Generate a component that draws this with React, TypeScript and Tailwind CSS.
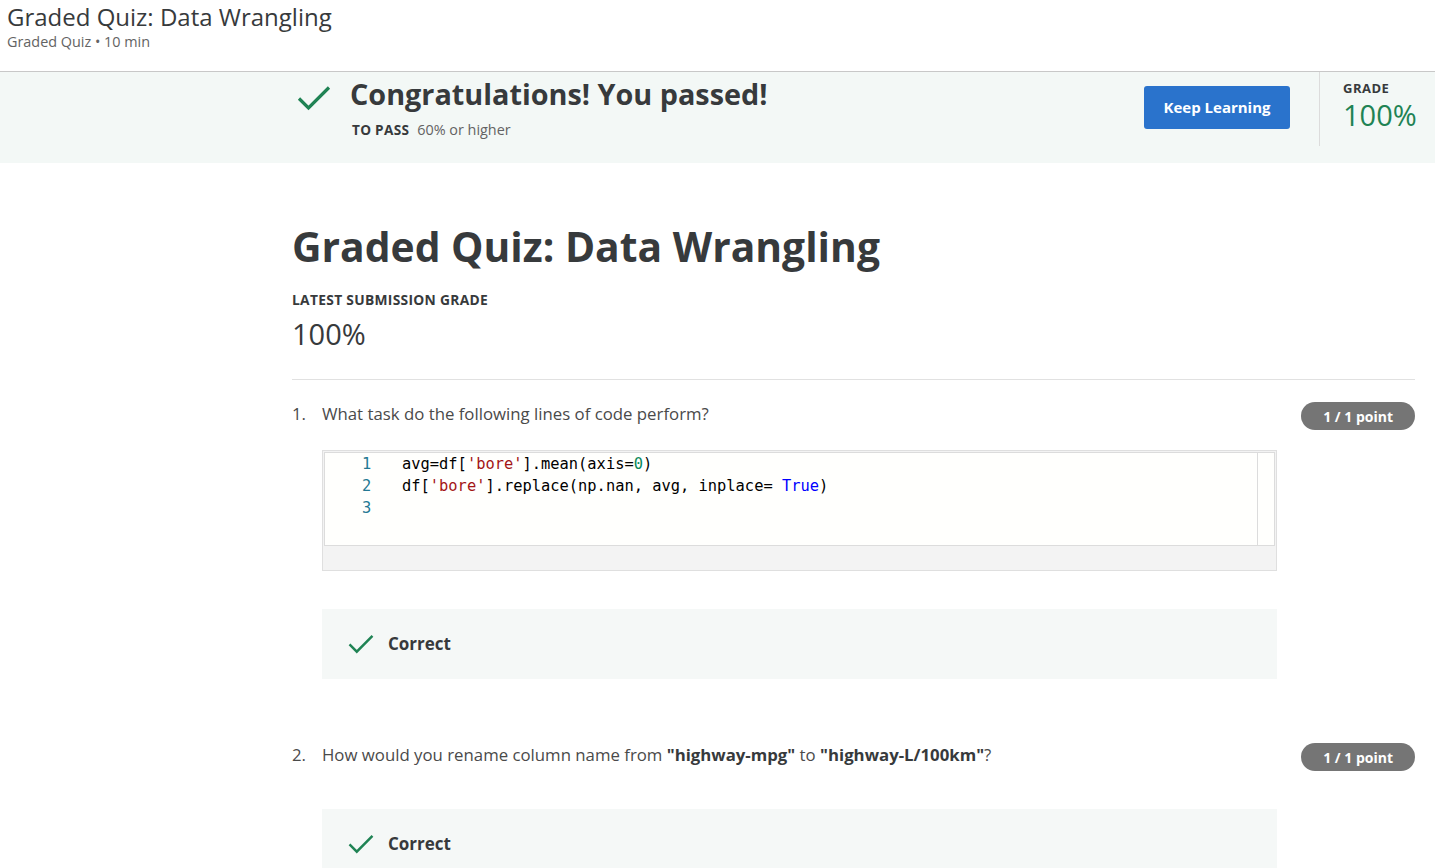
import React from "react";

const Check = ({ className }: { className?: string }) => (
  <svg viewBox="0 0 34 26" className={className} fill="none">
    <path d="M2 13.5 L11.5 23 L32 2.5" stroke="#1f8354" strokeWidth="3.2" />
  </svg>
);

const PointBadge = () => (
  <span className="shrink-0 rounded-full bg-[#757575] px-[22px] h-[28px] flex items-center text-[14px] font-bold text-white">
    1 / 1 point
  </span>
);

const Correct = () => (
  <div className="ml-[30px] w-[955px] h-[70px] bg-[#f5f8f7] flex items-center pl-[26px]">
    <Check className="w-[26px] h-[20px]" />
    <span className="ml-[14px] text-[17px] font-bold text-[#373a3c]">Correct</span>
  </div>
);

const App = () => {
  return (
    <div className="w-[1435px] h-[868px] overflow-hidden bg-white text-[#373a3c] font-['Open_Sans',sans-serif]">
      {/* page header */}
      <header className="h-[72px] border-b border-[#c8c8c8] pl-[7px] pt-[1px]">
        <h1 className="text-[24px] leading-[32px] text-[#373a3c]">Graded Quiz: Data Wrangling</h1>
        <div className="text-[14.4px] leading-[18px] text-[#636363]">Graded Quiz • 10 min</div>
      </header>

      {/* passed banner */}
      <section className="h-[91px] bg-[#f3f8f6] flex">
        <div className="ml-[297px] flex flex-1">
          <div className="pt-[13px]">
            <Check className="w-[34px] h-[26px]" />
          </div>
          <div className="ml-[19px] pt-[3px]">
            <div className="text-[28.8px] leading-[38px] font-bold text-[#373a3c]">Congratulations! You passed!</div>
            <div className="mt-[8px] ml-[2px] flex items-center text-[14.4px] leading-[18px]">
              <span className="font-bold text-[13.6px] tracking-[0.3px]">TO PASS</span>
              <span className="ml-[8px] text-[#636363]">60% or higher</span>
            </div>
          </div>
        </div>
        <div className="pt-[14px] pr-[29px]">
          <button className="h-[43px] w-[146px] rounded-[3px] bg-[#2a73cc] text-white text-[15px] font-bold">
            Keep Learning
          </button>
        </div>
        <div className="h-[74px] w-[116px] border-l border-[#dcdcdc] pl-[23px] pt-[9px]">
          <div className="text-[13px] font-bold leading-[14px] tracking-[0.5px]">GRADE</div>
          <div className="mt-[4px] text-[29px] leading-[32px] text-[#1f8354]">100%</div>
        </div>
      </section>

      {/* main content */}
      <main className="ml-[292px] mr-[20px] pt-[55px]">
        <h2 className="text-[40.8px] leading-[56px] font-bold text-[#373a3c]">Graded Quiz: Data Wrangling</h2>
        <div className="mt-[17px] text-[13.8px] leading-[18px] font-bold tracking-[0.3px]">LATEST SUBMISSION GRADE</div>
        <div className="mt-[7px] text-[29px] leading-[36px] text-[#373a3c]">100%</div>
        <div className="mt-[27px] border-t border-[#e1e1e1]" />

        {/* question 1 */}
        <div className="mt-[22px] flex items-start justify-between">
          <div className="flex text-[16.8px] leading-[24px] text-[#4a4a4a]">
            <span className="w-[30px]">1.</span>
            <span>What task do the following lines of code perform?</span>
          </div>
          <PointBadge />
        </div>

        <div className="mt-[20px] ml-[30px] w-[955px] border border-[#dfdfdf] bg-[#f3f3f3]">
          <div className="m-[1px] h-[94px] flex bg-[#fffffd] border border-[#dcdcdc]">
            <div className="flex-1 font-['DejaVu_Sans_Mono',monospace] text-[15.4px] leading-[22px]">
              {[
                <>avg=df[<span className="text-[#a31515]">'bore'</span>].mean(axis=<span className="text-[#09885a]">0</span>)</>,
                <>df[<span className="text-[#a31515]">'bore'</span>].replace(np.nan, avg, inplace= <span className="text-[#0000ff]">True</span>)</>,
                <></>,
              ].map((line, i) => (
                <div key={i} className="flex h-[22px]">
                  <span className="w-[77px] pl-[37px] text-[#237893]">{i + 1}</span>
                  <span className="text-[#000]">{line}</span>
                </div>
              ))}
            </div>
            <div className="w-[17px] border-l border-[#dcdcdc]" />
          </div>
          <div className="h-[23px]" />
        </div>

        <div className="mt-[38px]">
          <Correct />
        </div>

        {/* question 2 */}
        <div className="mt-[64px] flex items-start justify-between">
          <div className="flex text-[16.8px] leading-[24px] text-[#4a4a4a]">
            <span className="w-[30px]">2.</span>
            <span>
              How would you rename column name from <b className="text-[#373a3c]">"highway-mpg"</b> to{" "}
              <b className="text-[#373a3c]">"highway-L/100km"</b>?
            </span>
          </div>
          <PointBadge />
        </div>

        <div className="mt-[38px]">
          <Correct />
        </div>
      </main>
    </div>
  );
};

export default App;
